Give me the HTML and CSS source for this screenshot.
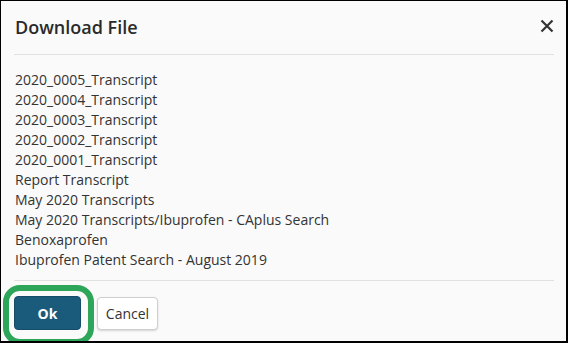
FILE: index.html
```html
<!DOCTYPE html>
<html lang="en">

<head>
    <meta charset="UTF-8" />
    <meta name="viewport" content="width=device-width, initial-scale=1" />
    <title>Download File</title>
    <link rel="stylesheet" href="styles.css">
</head>

<body>
    <div class="dialog">
        <div class="dialog-header">
            <h1>Download File</h1>
            <button class="close" aria-label="Close">
                <svg width="14" height="14" viewBox="0 0 14 14">
                    <path d="M1.5 1.5 L12.5 12.5 M12.5 1.5 L1.5 12.5" stroke="#333" stroke-width="2.2" fill="none" />
                </svg>
            </button>
        </div>
        <ul class="file-list">
            <li>2020_0005_Transcript</li>
            <li>2020_0004_Transcript</li>
            <li>2020_0003_Transcript</li>
            <li>2020_0002_Transcript</li>
            <li>2020_0001_Transcript</li>
            <li>Report Transcript</li>
            <li>May 2020 Transcripts</li>
            <li>May 2020 Transcripts/Ibuprofen - CAplus Search</li>
            <li>Benoxaprofen</li>
            <li>Ibuprofen Patent Search - August 2019</li>
        </ul>
        <div class="dialog-footer">
            <button class="btn btn-primary">Ok</button>
            <button class="btn btn-default">Cancel</button>
            <!-- annotation ring around the Ok button -->
            <span class="highlight"></span>
        </div>
    </div>
</body>

</html>
```

FILE: styles.css
```css
* {
    margin: 0;
    padding: 0;
    box-sizing: border-box;
}

body {
    font-family: 'Open Sans', 'Noto Sans', sans-serif;
    width: 568px;
    height: 343px;
    overflow: hidden;
}

.dialog {
    width: 568px;
    height: 343px;
    background: #fafafa;
    border-style: solid;
    border-color: #000;
    border-width: 1px 2px 2px 1px;
    display: flex;
    flex-direction: column;
    overflow: hidden;
}

.dialog-header {
    height: 54px;
    margin: 0 12px 0 13px;
    border-bottom: 1px solid #e1e1e1;
    display: flex;
    align-items: center;
    justify-content: space-between;
    padding-bottom: 1px;
}

.dialog-header h1 {
    font-size: 18px;
    font-weight: 600;
    color: #2a2a2a;
    padding-left: 1px;
}

.close {
    background: none;
    border: none;
    width: 14px;
    height: 14px;
    display: flex;
    margin-top: -3px;
}

.file-list {
    list-style: none;
    margin: 0 12px 0 13px;
    padding: 15px 0 10px 1px;
    border-bottom: 1px solid #e1e1e1;
    font-size: 14px;
    line-height: 20px;
    color: #333;
}

.dialog-footer {
    position: relative;
    display: flex;
    align-items: center;
    gap: 16px;
    padding: 15px 0 0 13px;
}

.btn {
    font-family: inherit;
    font-size: 14px;
    height: 34px;
    border-radius: 4px;
    cursor: pointer;
}

.btn-primary {
    width: 67px;
    background: #1a5a7a;
    color: #fff;
    font-weight: 700;
    font-size: 14px;
    border: 1px solid #154c68;
}

.btn-default {
    width: 61px;
    height: 33px;
    margin-top: 1px;
    background: #fff;
    color: #333;
    border: 1px solid #cfcfcf;
    box-shadow: 0 1px 2px rgba(0, 0, 0, 0.15);
}

.highlight {
    position: absolute;
    left: 2px;
    top: 4px;
    width: 91px;
    height: 60px;
    border: 6px solid #2ea65a;
    border-radius: 17px;
    pointer-events: none;
}
```
